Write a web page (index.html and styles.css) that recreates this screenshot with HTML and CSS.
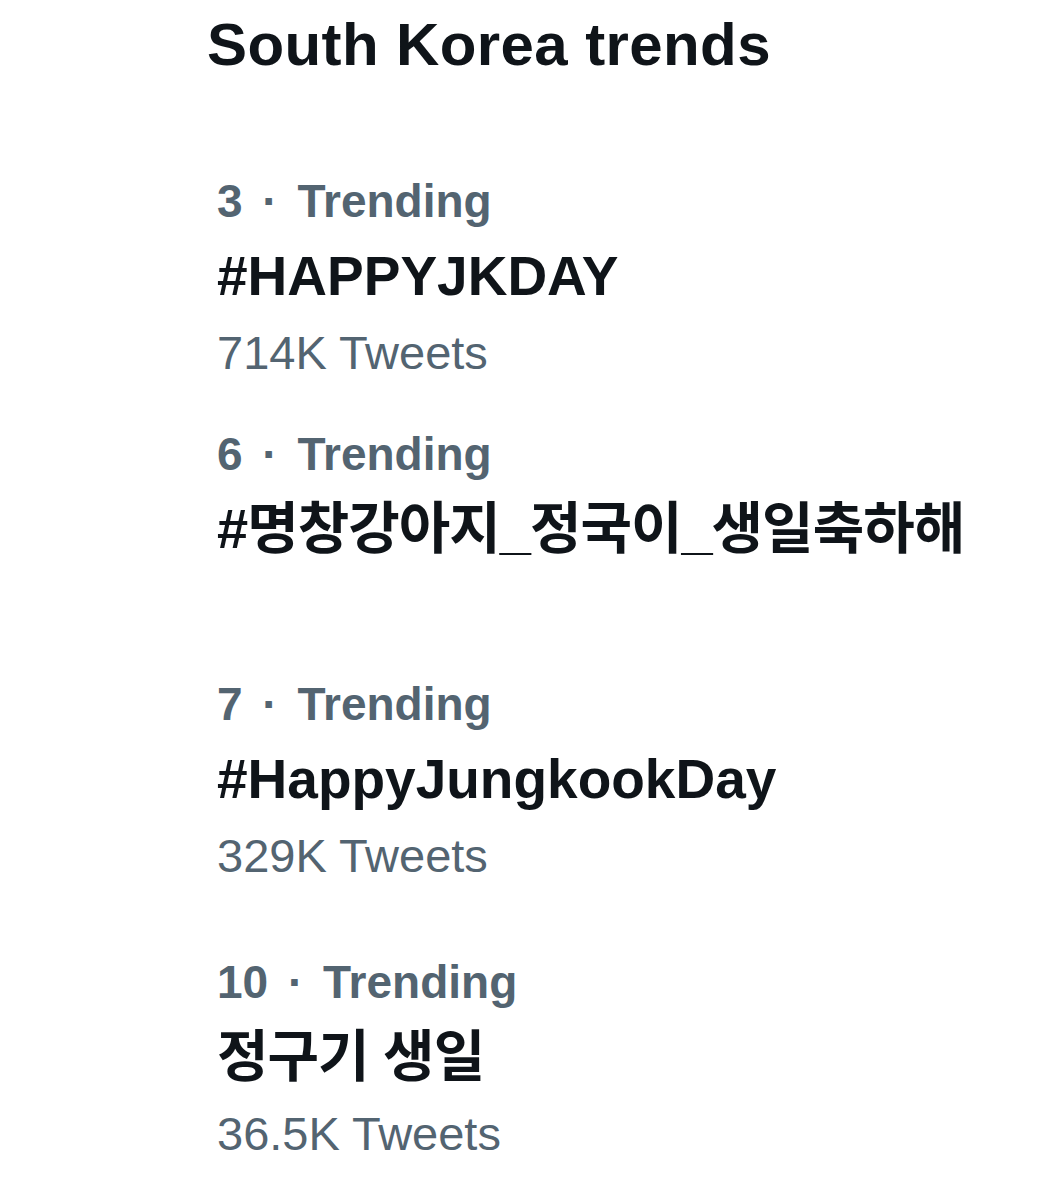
FILE: index.html
```html
<!DOCTYPE html>
<html lang="en">
<head>
<meta charset="utf-8">
<title>South Korea trends</title>
<link rel="stylesheet" href="styles.css">
</head>
<body>
<main class="page">
  <h1 class="title">South Korea trends</h1>
  <ul class="trends">
    <li class="trend">
      <div class="meta">3 · Trending</div>
      <div class="name">#HAPPYJKDAY</div>
      <div class="count">714K Tweets</div>
    </li>
    <li class="trend trend--nocount">
      <div class="meta">6 · Trending</div>
      <div class="name name--ko">#명창강아지_정국이_생일축하해</div>
    </li>
    <li class="trend trend--wide">
      <div class="meta">7 · Trending</div>
      <div class="name">#HappyJungkookDay</div>
      <div class="count">329K Tweets</div>
    </li>
    <li class="trend">
      <div class="meta">10 · Trending</div>
      <div class="name name--ko">정구기 생일</div>
      <div class="count">36.5K Tweets</div>
    </li>
  </ul>
</main>
</body>
</html>
```
FILE: styles.css
```css
html, body {
  margin: 0;
  background: #ffffff;
}

body {
  font-family: "Liberation Sans", Arial, "Noto Sans CJK KR", sans-serif;
}

.page {
  padding: 9px 0 0 207px;
}

.title {
  margin: 0;
  font-size: 60px;
  line-height: 72px;
  font-weight: 700;
  letter-spacing: 0.4px;
  color: #0f1419;
}

.trends {
  list-style: none;
  margin: 90px 0 0;
  padding: 0 0 0 10px;
}

.trend {
  padding-bottom: 39px;
}

.trend--nocount {
  padding-bottom: 100px;
}

.trend--wide {
  padding-bottom: 64px;
}

.meta {
  font-size: 46px;
  line-height: 60px;
  font-weight: 700;
  word-spacing: 7px;
  color: #536471;
}

.name {
  font-size: 55px;
  line-height: 90px;
  font-weight: 700;
  color: #0f1419;
}

.name--ko {
  font-size: 56px;
  letter-spacing: -1px;
}

.count {
  font-size: 47px;
  line-height: 64px;
  color: #536471;
}
```
